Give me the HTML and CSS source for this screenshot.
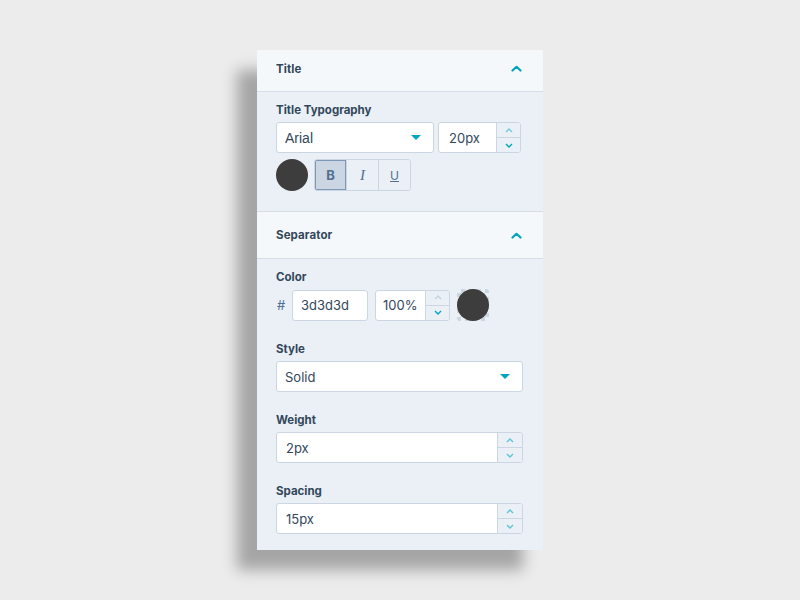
FILE: index.html
```html
<!DOCTYPE html>
<html>
<head>
<meta charset="utf-8">
<link rel="stylesheet" href="styles.css">
</head>
<body>
<div class="panel">
  <div class="sec-head first">
    <span class="sec-title">Title</span>
    <svg class="chev" width="11" height="7" viewBox="0 0 11 7"><path d="M1.5 5.5 L5.5 1.8 L9.5 5.5" fill="none" stroke="#00a4bd" stroke-width="2.2" stroke-linecap="round" stroke-linejoin="round"/></svg>
  </div>
  <div class="sec-body">
    <div class="label">Title Typography</div>
    <div class="row">
      <div class="select font-select"><span class="arial">Arial</span><span class="caret"></span></div>
      <div class="num small">
        <span class="num-val">20px</span>
        <div class="spin">
          <div class="spin-btn"><svg width="8" height="5" viewBox="0 0 8 5"><path d="M1 4 L4 1 L7 4" fill="none" stroke="#6fcbd9" stroke-width="1.4"/></svg></div>
          <div class="spin-btn"><svg width="8" height="5" viewBox="0 0 8 5"><path d="M1 1 L4 4 L7 1" fill="none" stroke="#00a4bd" stroke-width="1.4"/></svg></div>
        </div>
      </div>
    </div>
    <div class="row row2">
      <div class="dot"></div>
      <div class="btn-group">
        <div class="tbtn active">B</div>
        <div class="tbtn ital">I</div>
        <div class="tbtn und">U</div>
      </div>
    </div>
  </div>
  <div class="sec-head">
    <span class="sec-title">Separator</span>
    <svg class="chev" width="11" height="7" viewBox="0 0 11 7"><path d="M1.5 5.5 L5.5 1.8 L9.5 5.5" fill="none" stroke="#00a4bd" stroke-width="2.2" stroke-linecap="round" stroke-linejoin="round"/></svg>
  </div>
  <div class="sec-body last">
    <div class="label">Color</div>
    <div class="row color-row">
      <span class="hash">#</span>
      <div class="input hex">3d3d3d</div>
      <div class="num pct">
        <span class="num-val">100%</span>
        <div class="spin">
          <div class="spin-btn"><svg width="8" height="5" viewBox="0 0 8 5"><path d="M1 4 L4 1 L7 4" fill="none" stroke="#c5d2df" stroke-width="1.4"/></svg></div>
          <div class="spin-btn"><svg width="8" height="5" viewBox="0 0 8 5"><path d="M1 1 L4 4 L7 1" fill="none" stroke="#00a4bd" stroke-width="1.4"/></svg></div>
        </div>
      </div>
      <div class="swatch"><div class="swatch-dot"></div></div>
    </div>
    <div class="label gap">Style</div>
    <div class="select wide"><span>Solid</span><span class="caret"></span></div>
    <div class="label gap">Weight</div>
    <div class="num wide">
      <span class="num-val">2px</span>
      <div class="spin wide-spin">
        <div class="spin-btn"><svg width="8" height="5" viewBox="0 0 8 5"><path d="M1 4 L4 1 L7 4" fill="none" stroke="#5cc4d4" stroke-width="1.4"/></svg></div>
        <div class="spin-btn"><svg width="8" height="5" viewBox="0 0 8 5"><path d="M1 1 L4 4 L7 1" fill="none" stroke="#5cc4d4" stroke-width="1.4"/></svg></div>
      </div>
    </div>
    <div class="label gap">Spacing</div>
    <div class="num wide">
      <span class="num-val">15px</span>
      <div class="spin wide-spin">
        <div class="spin-btn"><svg width="8" height="5" viewBox="0 0 8 5"><path d="M1 4 L4 1 L7 4" fill="none" stroke="#5cc4d4" stroke-width="1.4"/></svg></div>
        <div class="spin-btn"><svg width="8" height="5" viewBox="0 0 8 5"><path d="M1 1 L4 4 L7 1" fill="none" stroke="#5cc4d4" stroke-width="1.4"/></svg></div>
      </div>
    </div>
  </div>
</div>
</body>
</html>
```
FILE: styles.css
```css
html, body {
  margin: 0;
  padding: 0;
}
body {
  background: #ececec;
  width: 800px;
  height: 600px;
  font-family: "Inter", "Lato", sans-serif;
  color: #33475b;
}
.panel {
  width: 286px;
  margin: 50px 0 0 257px;
  background: #eaf0f6;
  box-shadow: -20px 20px 14px rgba(0, 0, 0, 0.3);
}
.sec-head {
  height: 48px;
  box-sizing: border-box;
  background: #f5f8fa;
  border-top: 1px solid #d6dee8;
  border-bottom: 1px solid #d6dee8;
  display: flex;
  align-items: center;
  justify-content: space-between;
  padding: 0 21px 0 19px;
}
.sec-head.first {
  height: 42px;
  border-top: none;
  padding-bottom: 4px;
}
.sec-title {
  font-size: 11.5px;
  font-weight: 700;
  letter-spacing: 0.1px;
}
.chev {
  display: block;
}
.sec-body {
  padding: 10px 20px 20px 19px;
}
.sec-body.last {
  padding-bottom: 16px;
}
.label {
  font-size: 11.5px;
  font-weight: 700;
  line-height: 16px;
  margin-bottom: 4px;
}
.label.gap {
  margin-top: 20px;
}
.row {
  display: flex;
  gap: 4px;
  align-items: center;
}
.row2 {
  margin-top: 6px;
  gap: 6px;
}
.select, .input, .num {
  height: 31px;
  box-sizing: border-box;
  background: #fff;
  border: 1px solid #cbd6e2;
  border-radius: 3px;
  display: flex;
  align-items: center;
  font-size: 13px;
}
.select {
  justify-content: space-between;
  padding: 0 12px 0 8px;
}
.font-select {
  width: 158px;
}
.arial {
  font-family: "Liberation Sans", Arial, sans-serif;
  font-size: 14px;
}
.caret {
  width: 0;
  height: 0;
  border-left: 5px solid transparent;
  border-right: 5px solid transparent;
  border-top: 5px solid #00a4bd;
}
.num {
  justify-content: space-between;
  padding-left: 9px;
  overflow: hidden;
}
.num.small {
  width: 83px;
  padding-left: 10px;
}
.spin {
  width: 23px;
  height: 100%;
  display: flex;
  flex-direction: column;
  border-left: 1px solid #cbd6e2;
  background: #eaf0f6;
}
.spin-btn {
  flex: 1;
  display: flex;
  align-items: center;
  justify-content: center;
}
.spin-btn + .spin-btn {
  border-top: 1px solid #cbd6e2;
}
.spin-btn svg {
  display: block;
}
.wide {
  width: 247px;
}
.wide-spin {
  width: 24px;
}
.dot {
  width: 32px;
  height: 32px;
  border-radius: 50%;
  background: #3d3d3d;
}
.btn-group {
  display: flex;
  height: 32px;
  border: 1px solid #cbd6e2;
  border-radius: 3px;
  box-sizing: border-box;
  overflow: hidden;
}
.tbtn {
  width: 31px;
  display: flex;
  align-items: center;
  justify-content: center;
  font-size: 13px;
  color: #516f90;
  background: #eaf0f6;
}
.tbtn + .tbtn {
  border-left: 1px solid #cbd6e2;
}
.tbtn.active {
  background: #cbd6e2;
  font-weight: 700;
  box-shadow: inset 0 0 0 1px #7c98b6;
}
.ital {
  font-family: "Liberation Serif", serif;
  font-style: italic;
  font-size: 15px;
}
.und {
  text-decoration: underline;
  font-size: 12px;
}
.color-row {
  gap: 7px;
}
.hash {
  font-size: 13px;
  color: #516f90;
  width: 8px;
  margin-left: 1px;
}
.hex {
  width: 76px;
  padding-left: 8px;
}
.pct {
  width: 75px;
  padding-left: 7px;
}
.swatch {
  width: 32px;
  height: 32px;
  position: relative;
  background-color: #eaf0f6;
  background-image:
    linear-gradient(45deg, #cbd6e2 25%, transparent 25%, transparent 75%, #cbd6e2 75%),
    linear-gradient(45deg, #cbd6e2 25%, transparent 25%, transparent 75%, #cbd6e2 75%);
  background-size: 8px 8px;
  background-position: 0 0, 4px 4px;
  border-radius: 3px;
}
.swatch-dot {
  position: absolute;
  inset: 0;
  border-radius: 50%;
  background: #3d3d3d;
}
```
